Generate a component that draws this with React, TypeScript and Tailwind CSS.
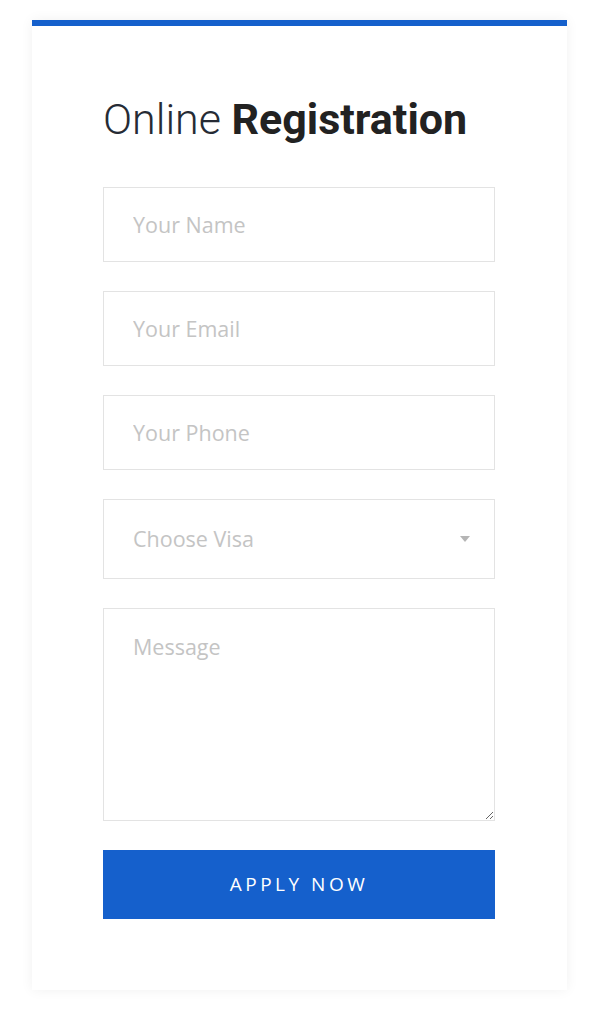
export default function App() {
  const field =
    "w-full h-[75px] border border-[#e3e3e3] bg-white px-[29px] text-[21.5px] text-[#555] placeholder:text-[#c4c4c4] outline-none";
  return (
    <div className="min-h-[1019px] bg-white pt-[20px]" style={{ fontFamily: "'Open Sans', sans-serif" }}>
      <div className="mx-[32px] w-[535px] border-t-[6px] border-[#1560cc] bg-white shadow-[0_0_12px_rgba(0,0,0,0.06)] pb-[71px] pl-[71px] pr-[72px] pt-[67px]">
        <h2
          className="text-[43px] leading-[52px] text-[#222] mb-[42px]"
          style={{ fontFamily: "Roboto, sans-serif" }}
        >
          <span className="font-light text-[#262b35]">Online </span>
          <span className="font-bold">Registration</span>
        </h2>
        <form className="flex flex-col gap-[29px]">
          <input className={field} placeholder="Your Name" />
          <input className={field} placeholder="Your Email" />
          <input className={field} placeholder="Your Phone" />
          <div className="relative">
            <select className={field + " h-[80px] appearance-none text-[#c4c4c4]"} defaultValue="">
              <option value="" disabled>
                Choose Visa
              </option>
            </select>
            <span className="pointer-events-none absolute right-[25px] top-[37px] h-0 w-0 border-x-[5px] border-t-[6px] border-x-transparent border-t-[#b5b5b5]" />
          </div>
          <textarea
            className="w-full h-[213px] border border-[#e3e3e3] bg-white px-[29px] pt-[22px] text-[21.5px] text-[#555] placeholder:text-[#c4c4c4] outline-none block"
            placeholder="Message"
          />
          <button
            type="button"
            className="h-[69px] w-full bg-[#1560cc] text-white text-[19px] tracking-[3.5px] uppercase"
          >
            Apply Now
          </button>
        </form>
      </div>
    </div>
  );
}
